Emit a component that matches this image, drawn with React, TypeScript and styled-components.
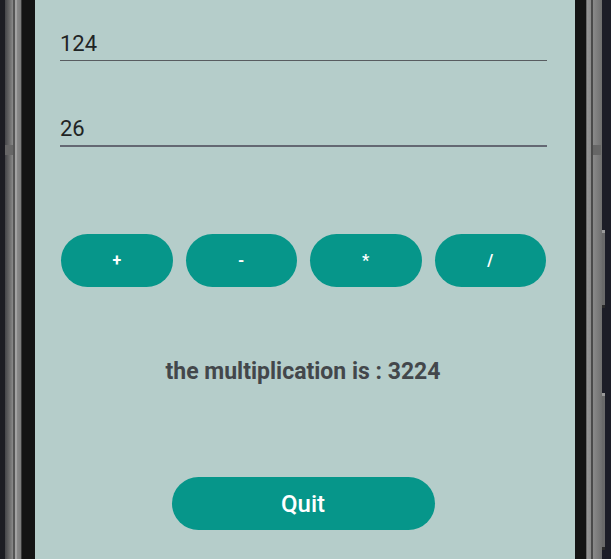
import React from "react";
import styled, { createGlobalStyle } from "styled-components";

const Global = createGlobalStyle`
  html, body { margin: 0; padding: 0; background: #141414; }
  body { font-family: Roboto, "Liberation Sans", sans-serif; }
`;

const Device = styled.div`
  display: flex;
  height: 559px;
  width: 611px;
  overflow: hidden;
`;

const LeftBezel = styled.div`
  position: relative;
  flex: 0 0 35px;
  background: linear-gradient(
    to right,
    #1c1d23 0px, #1c1d23 5px,
    #444548 5px, #6e6e6e 10px, #8a8a8a 13px,
    #555 13px, #555 15px,
    #a2a2a2 15px, #a2a2a2 17px,
    #8a8a8a 17px, #7a7a7a 21px,
    #3a3a3a 21px, #3a3a3a 22px,
    #141414 22px, #141414 35px
  );
`;

const RightBezel = styled.div`
  position: relative;
  flex: 0 0 36px;
  background: linear-gradient(
    to right,
    #141414 0px, #141414 11px,
    #6a6a6a 11px, #6a6a6a 12px,
    #959595 12px, #8a8a8a 16px,
    #4a4a4a 16px, #4a4a4a 18px,
    #8a8a8a 18px, #6f6f6f 27px,
    #1c1d27 27px, #1c1d27 36px
  );
`;

const Notch = styled.span<{ $left: number; $top: number }>`
  position: absolute;
  left: ${(p) => p.$left}px;
  top: ${(p) => p.$top}px;
  width: 8px;
  height: 10px;
  background: #666;
`;

const SideKey = styled.span<{ $top: number; $height: number }>`
  position: absolute;
  left: 27px;
  top: ${(p) => p.$top}px;
  width: 3px;
  height: ${(p) => p.$height}px;
  background: #6a6a6a;
  border-top: 3px solid #9a9a9a;
  border-bottom: 3px solid #2a2a2a;
`;

const Screen = styled.div`
  flex: 0 0 540px;
  background: #b5cdca;
  padding: 29px 28px 0 24px;
  box-sizing: border-box;
  display: flex;
  flex-direction: column;
`;

const Field = styled.input<{ $focused?: boolean }>`
  display: block;
  width: calc(100% - 1px);
  margin: 0 0 0 1px;
  box-sizing: border-box;
  border: none;
  border-bottom: ${(p) => (p.$focused ? "2px solid #646873" : "1px solid #585c60")};
  background: transparent;
  font-family: Roboto, "Liberation Sans", sans-serif;
  font-size: 22px;
  line-height: 26px;
  height: ${(p) => (p.$focused ? 33 : 32)}px;
  padding: 1px 0 4px 0;
  color: #1f2424;
  outline: none;
  & + & { margin-top: 53px; }
`;

const OpRow = styled.div`
  display: grid;
  grid-template-columns: repeat(4, 1fr);
  column-gap: 13px;
  margin: 87px 1px 0 2px;
`;

const OpButton = styled.button`
  height: 53px;
  border: none;
  border-radius: 27px;
  background: #06968a;
  color: #ffffff;
  font-family: Roboto, "Liberation Sans", sans-serif;
  font-weight: 700;
  font-size: 16px;
  padding: 0;
  cursor: pointer;
`;

const Result = styled.div`
  margin-top: 71px;
  text-align: center;
  font-family: Roboto, "Liberation Sans", sans-serif;
  font-weight: 700;
  font-size: 23px;
  line-height: 27px;
  color: #43474b;
`;

const QuitButton = styled.button`
  align-self: center;
  margin-top: 92px;
  width: 263px;
  height: 53px;
  border: none;
  border-radius: 27px;
  background: #06968a;
  color: #ffffff;
  font-family: Roboto, "Liberation Sans", sans-serif;
  font-weight: 500;
  font-size: 24px;
  padding: 0;
  cursor: pointer;
`;

export default function App() {
  return (
    <>
      <Global />
      <Device>
        <LeftBezel>
          <Notch $left={5} $top={145} />
        </LeftBezel>
        <Screen>
          <Field defaultValue="124" readOnly />
          <Field defaultValue="26" readOnly $focused />
          <OpRow>
            <OpButton>+</OpButton>
            <OpButton>-</OpButton>
            <OpButton>*</OpButton>
            <OpButton>/</OpButton>
          </OpRow>
          <Result>the multiplication is : 3224</Result>
          <QuitButton>Quit</QuitButton>
        </Screen>
        <RightBezel>
          <Notch $left={18} $top={145} />
          <SideKey $top={230} $height={72} />
          <SideKey $top={393} $height={151} />
        </RightBezel>
      </Device>
    </>
  );
}
